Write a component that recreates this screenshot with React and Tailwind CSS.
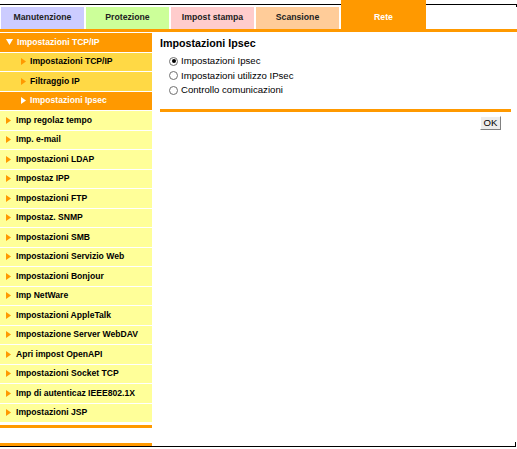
import React from "react";

const FONT = { fontFamily: '"Liberation Sans", Arial, sans-serif' };

const mainItems = [
  "Imp regolaz tempo",
  "Imp. e-mail",
  "Impostazioni LDAP",
  "Impostaz IPP",
  "Impostazioni FTP",
  "Impostaz. SNMP",
  "Impostazioni SMB",
  "Impostazioni Servizio Web",
  "Impostazioni Bonjour",
  "Imp NetWare",
  "Impostazioni AppleTalk",
  "Impostazione Server WebDAV",
  "Apri impost OpenAPI",
  "Impostazioni Socket TCP",
  "Imp di autenticaz IEEE802.1X",
  "Impostazioni JSP",
];

function TriRight({ color }) {
  return (
    <svg width="5" height="7" viewBox="0 0 5 7" className="shrink-0">
      <polygon points="0,0 5,3.5 0,7" fill={color} />
    </svg>
  );
}

function TriDown() {
  return (
    <svg width="7" height="6" viewBox="0 0 7 6" className="shrink-0">
      <polygon points="0,0 7,0 3.5,6" fill="#ffffff" />
    </svg>
  );
}

function Radio({ checked, label }) {
  return (
    <div className="flex items-center h-[14.5px] pl-[9px] gap-[3px]">
      <span className="w-[9px] h-[9px] rounded-full border border-[#707070] bg-white flex items-center justify-center shrink-0">
        {checked && <span className="w-[4px] h-[4px] rounded-full bg-black" />}
      </span>
      <span className="text-[9.6px] leading-none text-black">{label}</span>
    </div>
  );
}

export default function App() {
  return (
    <div className="w-[517px] h-[449px] bg-white relative overflow-hidden flex flex-col" style={FONT}>
      {/* top frame line */}
      <div className="absolute top-[4px] left-0 w-[517px] h-[3px] border-t border-r border-black" />

      {/* tabs */}
      <div className="flex items-end h-[29px] pl-[1px] gap-[2px]">
        <div className="w-[83px] h-[22px] bg-[#ccccff] flex items-center justify-center text-[8.7px] font-bold text-[#222]">
          Manutenzione
        </div>
        <div className="w-[83px] h-[22px] bg-[#ccff99] flex items-center justify-center text-[8.7px] font-bold text-[#222]">
          Protezione
        </div>
        <div className="w-[83px] h-[22px] bg-[#ffcccc] flex items-center justify-center text-[8.7px] font-bold text-[#222]">
          Impost stampa
        </div>
        <div className="w-[83px] h-[22px] bg-[#ffcc99] flex items-center justify-center text-[8.7px] font-bold text-[#222]">
          Scansione
        </div>
        <div className="w-[85px] h-[29px] bg-[#ff9900] flex items-center justify-center pt-[7px] text-[8.7px] font-bold text-white relative z-10">
          Rete
        </div>
      </div>
      <div className="h-[3px] w-[517px] bg-[#ff9900]" />

      <div className="flex flex-1">
        {/* sidebar */}
        <div className="w-[152px] flex flex-col pt-px">
          <div className="h-[18.5px] mb-px bg-[#ff9900] flex items-center pl-[6px] gap-[4px]">
            <TriDown />
            <span className="text-[8.6px] font-bold text-white leading-none">Impostazioni TCP/IP</span>
          </div>
          <div className="h-[18.5px] mb-px bg-[#ffd945] flex items-center pl-[21px] gap-[4px]">
            <TriRight color="#ff9900" />
            <span className="text-[8.6px] font-bold text-black leading-none">Impostazioni TCP/IP</span>
          </div>
          <div className="h-[18.5px] mb-px bg-[#ffd945] flex items-center pl-[21px] gap-[4px]">
            <TriRight color="#ff9900" />
            <span className="text-[8.6px] font-bold text-black leading-none">Filtraggio IP</span>
          </div>
          <div className="h-[18.5px] mb-px bg-[#ff9900] flex items-center pl-[21px] gap-[4px]">
            <TriRight color="#ffffff" />
            <span className="text-[8.6px] font-bold text-white leading-none">Impostazioni Ipsec</span>
          </div>
          {mainItems.map((t) => (
            <div key={t} className="h-[18.5px] mb-px bg-[#ffff99] flex items-center pl-[6px] gap-[5px]">
              <TriRight color="#ff9900" />
              <span className="text-[8.6px] font-bold text-black leading-none">{t}</span>
            </div>
          ))}
          <div className="h-[3px] bg-[#ff9900] mt-[2px]" />
          <div className="h-[15px]" />
          <div className="h-[3px] bg-[#ff9900]" />
        </div>

        {/* content */}
        <div className="ml-[8px] w-[351px] flex flex-col pt-[4px]">
          <div className="text-[10.7px] font-bold leading-[14px] text-black">Impostazioni Ipsec</div>
          <div className="mt-[4px] flex flex-col">
            <Radio checked label="Impostazioni Ipsec" />
            <Radio label="Impostazioni utilizzo IPsec" />
            <Radio label="Controllo comunicazioni" />
          </div>
          <div className="mt-[11px] h-[3px] bg-[#ff9900]" />
          <div className="flex justify-end mt-[4px] pr-[10px]">
            <button className="w-[21px] h-[14px] bg-[#ececec] border border-t-white border-l-white border-r-[#808080] border-b-[#808080] text-[9.6px] leading-none text-black flex items-center justify-center">
              OK
            </button>
          </div>
        </div>
      </div>

      {/* bottom frame line */}
      <div className="absolute top-[442px] left-0 w-[516px] h-[5px] border-b border-r border-black" />
    </div>
  );
}
